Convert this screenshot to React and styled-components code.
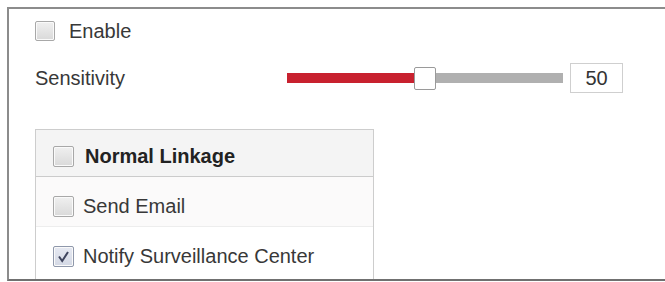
import React, { useState } from "react"
import styled, { createGlobalStyle } from "styled-components"

const GlobalStyle = createGlobalStyle`
  html, body {
    margin: 0;
    padding: 0;
    background: #fff;
  }
  body {
    font-family: "Liberation Sans", Arial, sans-serif;
    color: #383838;
  }
`

const Panel = styled.div`
  margin: 7px 0 0 7px;
  width: 650px;
  height: 270px;
  border: 2px solid #8c8c8c;
  border-bottom-color: #707070;
  overflow: hidden;
  padding: 0 0 0 26px;
`

const Row = styled.div`
  display: flex;
  align-items: center;
  height: ${(p) => p.$h}px;
`

const Label = styled.span`
  font-size: 20px;
  font-weight: ${(p) => (p.$bold ? 700 : 400)};
  color: ${(p) => (p.$bold ? "#222" : "#383838")};
`

const Box = styled.span`
  display: inline-flex;
  align-items: center;
  justify-content: center;
  box-sizing: border-box;
  width: ${(p) => p.$size || 19}px;
  height: ${(p) => p.$size || 19}px;
  margin-right: ${(p) => p.$gap || 14}px;
  border: 1px solid ${(p) => (p.$checked ? "#8f98ab" : "#a8a8a8")};
  border-radius: 2px;
  background: ${(p) =>
    p.$checked
      ? "linear-gradient(#e6e9f2, #d3d8e4)"
      : "linear-gradient(#f0f0f0, #d9d9d9)"};
  box-shadow: inset 0 0 0 1px #fafafa;
  cursor: pointer;
`

const SensLabel = styled(Label)`
  width: 252px;
`

const Track = styled.div`
  position: relative;
  width: 276px;
  height: 10px;
  background: #b0b0b0;
`

const Fill = styled.div`
  height: 100%;
  background: #c8212f;
`

const Thumb = styled.div`
  position: absolute;
  top: -6px;
  width: 22px;
  height: 23px;
  box-sizing: border-box;
  margin-left: -11px;
  background: #fff;
  border: 1px solid #9a9a9a;
  border-radius: 2px;
`

const ValueBox = styled.div`
  margin-left: 7px;
  width: 53px;
  height: 30px;
  box-sizing: border-box;
  border: 1px solid #cfcfcf;
  display: flex;
  align-items: center;
  justify-content: center;
  font-size: 20px;
  color: #333;
`

const Linkage = styled.div`
  margin-top: 26px;
  width: 337px;
  border: 1px solid #cdcdcd;
  border-bottom: none;
`

const LinkRow = styled.div`
  display: flex;
  align-items: center;
  box-sizing: border-box;
  height: ${(p) => p.$h}px;
  padding: ${(p) => p.$pt || 0}px 0 0 17px;
  background: ${(p) => p.$bg || "#fff"};
  border-bottom: 1px solid ${(p) => p.$line || "transparent"};
`

const Check = () => (
  <svg width="15" height="15" viewBox="0 0 15 15">
    <path d="M3 7.5 L6.2 12 L12 3" fill="none" stroke="#3f455e" strokeWidth="2" />
  </svg>
)

export default function App() {
  const [value] = useState(50)
  return (
    <>
      <GlobalStyle />
      <Panel>
        <Row $h={44}>
          <Box $size={20} />
          <Label>Enable</Label>
        </Row>
        <Row $h={50}>
          <SensLabel>Sensitivity</SensLabel>
          <Track>
            <Fill style={{ width: `${value}%` }} />
            <Thumb style={{ left: `${value}%` }} />
          </Track>
          <ValueBox>{value}</ValueBox>
        </Row>
        <Linkage>
          <LinkRow $h={47} $pt={7} $bg="#f4f4f4" $line="#cbcbcb">
            <Box $size={21} $gap={11} />
            <Label $bold>Normal Linkage</Label>
          </LinkRow>
          <LinkRow $h={50} $pt={10} $bg="#fbfafa" $line="#ededed">
            <Box $size={21} $gap={9} />
            <Label>Send Email</Label>
          </LinkRow>
          <LinkRow $h={60}>
            <Box $size={21} $gap={9} $checked>
              <Check />
            </Box>
            <Label>Notify Surveillance Center</Label>
          </LinkRow>
        </Linkage>
      </Panel>
    </>
  )
}
